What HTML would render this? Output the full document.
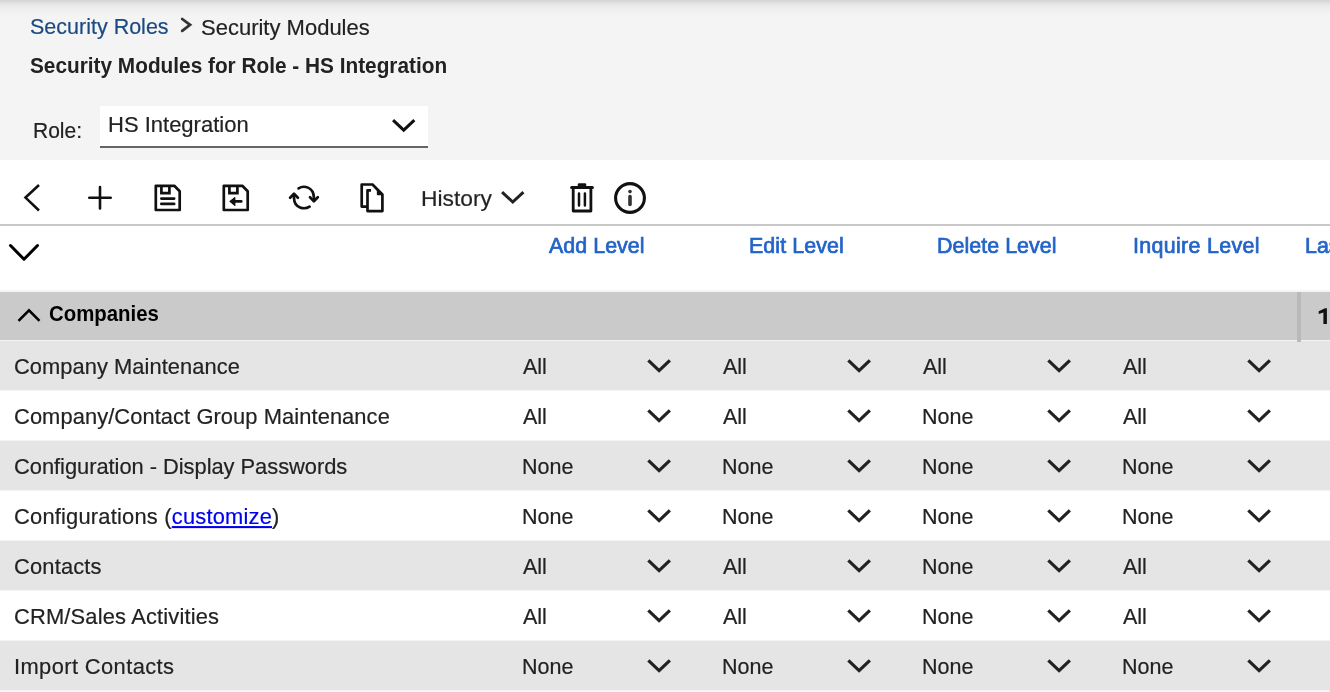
<!DOCTYPE html>
<html><head><meta charset="utf-8"><style>
html,body{margin:0;padding:0;}
body{width:1330px;height:692px;overflow:hidden;position:relative;background:#fff;font-family:"Liberation Sans",sans-serif;}
.t{position:absolute;white-space:nowrap;line-height:normal;will-change:transform;}
.ic{position:absolute;overflow:visible;}
.bx{position:absolute;}
</style></head><body>
<div class="bx" style="left:0;top:0;width:1330px;height:160px;background:#f4f4f4"></div>
<div class="bx" style="left:0;top:0;width:1330px;height:15px;background:linear-gradient(#d3d3d3 0px,#e2e2e2 3px,#eaeaea 6px,#f0f0f0 10px,#f4f4f4 15px)"></div>
<div class="t" style="left:29.8px;top:15.22px;font-size:21.5px;color:#1b4a80;font-weight:normal;transform:scaleY(1.0516);transform-origin:0 19.78px;-webkit-text-stroke:0.2px #1b4a80;">Security Roles</div>
<svg class="ic" style="left:178px;top:16px" width="16" height="18"><polyline points="4.2,3 12,8.8 4.2,14.8" fill="none" stroke="#333" stroke-width="2.8" stroke-linecap="round"/></svg>
<div class="t" style="left:201px;top:14.76px;font-size:22px;color:#222;font-weight:normal;transform:scaleY(1.0277);transform-origin:0 20.24px;-webkit-text-stroke:0.2px #222;">Security Modules</div>
<div class="t" style="left:29.5px;top:53.96px;font-size:20.8px;color:#222;font-weight:bold;transform:scaleY(1.0870);transform-origin:0 19.14px;">Security Modules for Role - HS Integration</div>
<div class="t" style="left:33px;top:118.58px;font-size:21px;color:#222;font-weight:normal;transform:scaleY(1.0766);transform-origin:0 19.32px;-webkit-text-stroke:0.2px #222;">Role:</div>
<div class="bx" style="left:100px;top:106px;width:328px;height:40px;background:#fff;border-bottom:2px solid #666"></div>
<div class="t" style="left:108px;top:111.86px;font-size:22px;color:#222;font-weight:normal;transform:scaleY(1.0277);transform-origin:0 20.24px;-webkit-text-stroke:0.2px #222;">HS Integration</div>
<svg class="ic" style="left:389.4px;top:116px" width="29.4" height="19.3"><polyline points="4.06,4.06 14.70,14.18 25.34,4.06" fill="none" stroke="#111" stroke-width="3" stroke-linecap="butt" stroke-linejoin="miter"/></svg>
<div class="bx" style="left:0;top:224px;width:1330px;height:2px;background:#c8c8c8"></div>
<svg class="ic" style="left:20px;top:180px" width="24" height="36"><polyline points="19,5 5.5,17.6 19,30.5" fill="none" stroke="#111" stroke-width="2.6"/></svg>
<svg class="ic" style="left:84px;top:182px" width="32" height="32"><path d="M5.3,15.7 H26.7 M16,5.1 V26.4" fill="none" stroke="#111" stroke-width="2.6" stroke-linecap="round"/></svg>
<svg class="ic" style="left:154px;top:184px" width="28" height="28"><path d="M1.8,1.8 H20.3 L25.7,7.2 V26 H1.8 Z" fill="none" stroke="#111" stroke-width="2.7" stroke-linejoin="round"/><path d="M7.4,1.8 V9.2 H15.4 V1.8" fill="none" stroke="#111" stroke-width="2.7"/><path d="M7.3,14.6 H20.2 M7.3,19.9 H20.2" stroke="#111" stroke-width="2.6" stroke-linecap="round"/></svg>
<svg class="ic" style="left:222px;top:184px" width="28" height="28"><path d="M1.8,1.8 H20.3 L25.7,7.2 V26 H1.8 Z" fill="none" stroke="#111" stroke-width="2.7" stroke-linejoin="round"/><path d="M7.4,1.8 V9.2 H15.4 V1.8" fill="none" stroke="#111" stroke-width="2.7"/><path d="M19.3,17.4 H10" stroke="#111" stroke-width="2.6" stroke-linecap="round"/><path d="M8,17.4 L12.8,13.6 V21.4 Z" fill="#111" stroke="#111" stroke-width="1.2" stroke-linejoin="round"/></svg>
<svg class="ic" style="left:288px;top:184px" width="32" height="28"><path d="M10.6,4.4 C15.5,1.2 25.5,2.5 25.9,13.5 V16" fill="none" stroke="#111" stroke-width="2.7" stroke-linecap="round"/><path d="M22,13.3 L25.9,17.2 L29.8,13.3" fill="none" stroke="#111" stroke-width="2.7" stroke-linecap="round" stroke-linejoin="round"/><path d="M21.6,22.6 C16.5,25.8 6.3,24.5 6,14 V11" fill="none" stroke="#111" stroke-width="2.7" stroke-linecap="round"/><path d="M2.1,13.7 L6,9.8 L9.9,13.7" fill="none" stroke="#111" stroke-width="2.7" stroke-linecap="round" stroke-linejoin="round"/></svg>
<svg class="ic" style="left:358px;top:181px" width="30" height="34"><path d="M9.5,25.6 H3.7 V3.5 H14.5 L24.4,13.4 V30.1 H9.5 V9.3 H13" fill="none" stroke="#111" stroke-width="2.7" stroke-linejoin="round"/><path d="M14.5,3.5 L24.4,13.4 H19.6 V9.5 Z" fill="#111" stroke="#111" stroke-width="1.5" stroke-linejoin="round"/></svg>
<div class="t" style="left:421.3px;top:185.12px;font-size:22.8px;color:#222;font-weight:normal;transform:scaleY(0.9916);transform-origin:0 20.98px;-webkit-text-stroke:0.2px #222;">History</div>
<svg class="ic" style="left:498.1px;top:188.2px" width="29.5" height="19.1"><polyline points="4.06,4.06 14.75,13.98 25.44,4.06" fill="none" stroke="#222" stroke-width="3" stroke-linecap="butt" stroke-linejoin="miter"/></svg>
<svg class="ic" style="left:568px;top:181px" width="28" height="34"><path d="M3.6,6.5 H24.4" stroke="#111" stroke-width="3" stroke-linecap="round"/><path d="M9.8,6 V3.5 Q9.8,2.3 11,2.3 H17 Q18.2,2.3 18.2,3.5 V6 Z" fill="#111"/><path d="M5.2,7 V30 H22.9 V7" fill="none" stroke="#111" stroke-width="2.8" stroke-linejoin="round"/><path d="M11,12.6 V24.4 M16.9,12.6 V24.4" stroke="#111" stroke-width="2.5" stroke-linecap="round"/></svg>
<svg class="ic" style="left:612px;top:180px" width="36" height="36"><circle cx="18" cy="18" r="14.4" fill="none" stroke="#111" stroke-width="3.1"/><circle cx="18" cy="11.6" r="1.8" fill="#333"/><path d="M18,16.6 V24.4" stroke="#333" stroke-width="3.6" stroke-linecap="round"/></svg>
<svg class="ic" style="left:6px;top:241.2px" width="36" height="22.8"><polyline points="4.50,4.50 18.00,18.30 31.50,4.50" fill="none" stroke="#000" stroke-width="3" stroke-linecap="round" stroke-linejoin="round"/></svg>
<div class="t" style="left:549px;top:234.11px;font-size:21.4px;color:#2364c8;font-weight:normal;transform:scaleY(1.0565);transform-origin:0 19.69px;-webkit-text-stroke:0.7px #2364c8;letter-spacing:0.05px;">Add Level</div>
<div class="t" style="left:749px;top:234.11px;font-size:21.4px;color:#2364c8;font-weight:normal;transform:scaleY(1.0565);transform-origin:0 19.69px;-webkit-text-stroke:0.7px #2364c8;letter-spacing:0.1px;">Edit Level</div>
<div class="t" style="left:936.8px;top:234.11px;font-size:21.4px;color:#2364c8;font-weight:normal;transform:scaleY(1.0565);transform-origin:0 19.69px;-webkit-text-stroke:0.7px #2364c8;letter-spacing:0.05px;">Delete Level</div>
<div class="t" style="left:1133.4px;top:234.11px;font-size:21.4px;color:#2364c8;font-weight:normal;transform:scaleY(1.0565);transform-origin:0 19.69px;-webkit-text-stroke:0.7px #2364c8;letter-spacing:0.33px;">Inquire Level</div>
<div class="t" style="left:1304.7px;top:234.11px;font-size:21.4px;color:#2364c8;font-weight:normal;transform:scaleY(1.0565);transform-origin:0 19.69px;-webkit-text-stroke:0.7px #2364c8;letter-spacing:0px;">Last Changed</div>
<div class="bx" style="left:0;top:290px;width:1330px;height:2px;background:#f4f4f4"></div>
<div class="bx" style="left:0;top:292px;width:1330px;height:48px;background:#cacaca"></div>
<svg class="ic" style="left:15px;top:306px" width="28" height="20"><polyline points="3.5,14.8 14,4.3 24.5,14.8" fill="none" stroke="#000" stroke-width="2.6"/></svg>
<div class="t" style="left:48.7px;top:302.93px;font-size:20.4px;color:#000;font-weight:bold;transform:scaleY(1.1083);transform-origin:0 18.77px;">Companies</div>
<div class="bx" style="left:1297px;top:292px;width:4px;height:50px;background:#b9b9b9;z-index:2"></div>
<svg class="ic" style="left:1316px;top:306px" width="14" height="20"><path d="M2.7,5.3 L9,2.3 H10.9 V18 H7.4 V6.4 L2.7,8.1 Z" fill="#111"/></svg>
<div class="bx" style="left:0;top:340px;width:1330px;height:1px;background:#f4f4f4"></div>
<div class="bx" style="left:0;top:341px;width:1330px;height:49px;background:#e5e5e5"></div>
<div class="t" style="left:13.8px;top:353.85px;font-size:21.9px;color:#222;font-weight:normal;transform:scaleY(1.0324);transform-origin:0 20.15px;-webkit-text-stroke:0.2px #222;letter-spacing:0.04px;">Company Maintenance</div>
<div class="t" style="left:522.7px;top:354.92px;font-size:21.5px;color:#222;font-weight:normal;transform:scaleY(1.0516);transform-origin:0 19.78px;-webkit-text-stroke:0.2px #222;">All</div>
<svg class="ic" style="left:644.1999999999999px;top:356.0px" width="30.200000000000003" height="20.0"><polyline points="4.33,4.33 15.10,14.54 25.87,4.33" fill="none" stroke="#222" stroke-width="3.2" stroke-linecap="butt" stroke-linejoin="miter"/></svg>
<div class="t" style="left:722.7px;top:354.92px;font-size:21.5px;color:#222;font-weight:normal;transform:scaleY(1.0516);transform-origin:0 19.78px;-webkit-text-stroke:0.2px #222;">All</div>
<svg class="ic" style="left:844.1999999999999px;top:356.0px" width="30.200000000000003" height="20.0"><polyline points="4.33,4.33 15.10,14.54 25.87,4.33" fill="none" stroke="#222" stroke-width="3.2" stroke-linecap="butt" stroke-linejoin="miter"/></svg>
<div class="t" style="left:922.7px;top:354.92px;font-size:21.5px;color:#222;font-weight:normal;transform:scaleY(1.0516);transform-origin:0 19.78px;-webkit-text-stroke:0.2px #222;">All</div>
<svg class="ic" style="left:1044.2px;top:356.0px" width="30.200000000000003" height="20.0"><polyline points="4.33,4.33 15.10,14.54 25.87,4.33" fill="none" stroke="#222" stroke-width="3.2" stroke-linecap="butt" stroke-linejoin="miter"/></svg>
<div class="t" style="left:1122.7px;top:354.92px;font-size:21.5px;color:#222;font-weight:normal;transform:scaleY(1.0516);transform-origin:0 19.78px;-webkit-text-stroke:0.2px #222;">All</div>
<svg class="ic" style="left:1244.2px;top:356.0px" width="30.200000000000003" height="20.0"><polyline points="4.33,4.33 15.10,14.54 25.87,4.33" fill="none" stroke="#222" stroke-width="3.2" stroke-linecap="butt" stroke-linejoin="miter"/></svg>
<div class="bx" style="left:0;top:390px;width:1330px;height:1px;background:#f4f4f4"></div>
<div class="bx" style="left:0;top:391px;width:1330px;height:49px;background:#ffffff"></div>
<div class="t" style="left:13.8px;top:403.85px;font-size:21.9px;color:#222;font-weight:normal;transform:scaleY(1.0324);transform-origin:0 20.15px;-webkit-text-stroke:0.2px #222;letter-spacing:0.07px;">Company/Contact Group Maintenance</div>
<div class="t" style="left:522.7px;top:404.92px;font-size:21.5px;color:#222;font-weight:normal;transform:scaleY(1.0516);transform-origin:0 19.78px;-webkit-text-stroke:0.2px #222;">All</div>
<svg class="ic" style="left:644.1999999999999px;top:406.0px" width="30.200000000000003" height="20.0"><polyline points="4.33,4.33 15.10,14.54 25.87,4.33" fill="none" stroke="#222" stroke-width="3.2" stroke-linecap="butt" stroke-linejoin="miter"/></svg>
<div class="t" style="left:722.7px;top:404.92px;font-size:21.5px;color:#222;font-weight:normal;transform:scaleY(1.0516);transform-origin:0 19.78px;-webkit-text-stroke:0.2px #222;">All</div>
<svg class="ic" style="left:844.1999999999999px;top:406.0px" width="30.200000000000003" height="20.0"><polyline points="4.33,4.33 15.10,14.54 25.87,4.33" fill="none" stroke="#222" stroke-width="3.2" stroke-linecap="butt" stroke-linejoin="miter"/></svg>
<div class="t" style="left:921.9px;top:404.92px;font-size:21.5px;color:#222;font-weight:normal;transform:scaleY(1.0516);transform-origin:0 19.78px;-webkit-text-stroke:0.2px #222;">None</div>
<svg class="ic" style="left:1044.2px;top:406.0px" width="30.200000000000003" height="20.0"><polyline points="4.33,4.33 15.10,14.54 25.87,4.33" fill="none" stroke="#222" stroke-width="3.2" stroke-linecap="butt" stroke-linejoin="miter"/></svg>
<div class="t" style="left:1122.7px;top:404.92px;font-size:21.5px;color:#222;font-weight:normal;transform:scaleY(1.0516);transform-origin:0 19.78px;-webkit-text-stroke:0.2px #222;">All</div>
<svg class="ic" style="left:1244.2px;top:406.0px" width="30.200000000000003" height="20.0"><polyline points="4.33,4.33 15.10,14.54 25.87,4.33" fill="none" stroke="#222" stroke-width="3.2" stroke-linecap="butt" stroke-linejoin="miter"/></svg>
<div class="bx" style="left:0;top:440px;width:1330px;height:1px;background:#f4f4f4"></div>
<div class="bx" style="left:0;top:441px;width:1330px;height:49px;background:#e5e5e5"></div>
<div class="t" style="left:13.8px;top:453.85px;font-size:21.9px;color:#222;font-weight:normal;transform:scaleY(1.0324);transform-origin:0 20.15px;-webkit-text-stroke:0.2px #222;letter-spacing:-0.04px;">Configuration - Display Passwords</div>
<div class="t" style="left:521.9px;top:454.92px;font-size:21.5px;color:#222;font-weight:normal;transform:scaleY(1.0516);transform-origin:0 19.78px;-webkit-text-stroke:0.2px #222;">None</div>
<svg class="ic" style="left:644.1999999999999px;top:456.0px" width="30.200000000000003" height="20.0"><polyline points="4.33,4.33 15.10,14.54 25.87,4.33" fill="none" stroke="#222" stroke-width="3.2" stroke-linecap="butt" stroke-linejoin="miter"/></svg>
<div class="t" style="left:721.9px;top:454.92px;font-size:21.5px;color:#222;font-weight:normal;transform:scaleY(1.0516);transform-origin:0 19.78px;-webkit-text-stroke:0.2px #222;">None</div>
<svg class="ic" style="left:844.1999999999999px;top:456.0px" width="30.200000000000003" height="20.0"><polyline points="4.33,4.33 15.10,14.54 25.87,4.33" fill="none" stroke="#222" stroke-width="3.2" stroke-linecap="butt" stroke-linejoin="miter"/></svg>
<div class="t" style="left:921.9px;top:454.92px;font-size:21.5px;color:#222;font-weight:normal;transform:scaleY(1.0516);transform-origin:0 19.78px;-webkit-text-stroke:0.2px #222;">None</div>
<svg class="ic" style="left:1044.2px;top:456.0px" width="30.200000000000003" height="20.0"><polyline points="4.33,4.33 15.10,14.54 25.87,4.33" fill="none" stroke="#222" stroke-width="3.2" stroke-linecap="butt" stroke-linejoin="miter"/></svg>
<div class="t" style="left:1121.9px;top:454.92px;font-size:21.5px;color:#222;font-weight:normal;transform:scaleY(1.0516);transform-origin:0 19.78px;-webkit-text-stroke:0.2px #222;">None</div>
<svg class="ic" style="left:1244.2px;top:456.0px" width="30.200000000000003" height="20.0"><polyline points="4.33,4.33 15.10,14.54 25.87,4.33" fill="none" stroke="#222" stroke-width="3.2" stroke-linecap="butt" stroke-linejoin="miter"/></svg>
<div class="bx" style="left:0;top:490px;width:1330px;height:1px;background:#f4f4f4"></div>
<div class="bx" style="left:0;top:491px;width:1330px;height:49px;background:#ffffff"></div>
<div class="t" style="left:13.8px;top:503.85px;font-size:21.9px;color:#222;font-weight:normal;transform:scaleY(1.0324);transform-origin:0 20.15px;-webkit-text-stroke:0.2px #222;letter-spacing:0.2px;">Configurations (<span style="color:#0000ee;text-decoration:underline;-webkit-text-stroke:0.2px #0000ee">customize</span>)</div>
<div class="t" style="left:521.9px;top:504.92px;font-size:21.5px;color:#222;font-weight:normal;transform:scaleY(1.0516);transform-origin:0 19.78px;-webkit-text-stroke:0.2px #222;">None</div>
<svg class="ic" style="left:644.1999999999999px;top:506.0px" width="30.200000000000003" height="20.0"><polyline points="4.33,4.33 15.10,14.54 25.87,4.33" fill="none" stroke="#222" stroke-width="3.2" stroke-linecap="butt" stroke-linejoin="miter"/></svg>
<div class="t" style="left:721.9px;top:504.92px;font-size:21.5px;color:#222;font-weight:normal;transform:scaleY(1.0516);transform-origin:0 19.78px;-webkit-text-stroke:0.2px #222;">None</div>
<svg class="ic" style="left:844.1999999999999px;top:506.0px" width="30.200000000000003" height="20.0"><polyline points="4.33,4.33 15.10,14.54 25.87,4.33" fill="none" stroke="#222" stroke-width="3.2" stroke-linecap="butt" stroke-linejoin="miter"/></svg>
<div class="t" style="left:921.9px;top:504.92px;font-size:21.5px;color:#222;font-weight:normal;transform:scaleY(1.0516);transform-origin:0 19.78px;-webkit-text-stroke:0.2px #222;">None</div>
<svg class="ic" style="left:1044.2px;top:506.0px" width="30.200000000000003" height="20.0"><polyline points="4.33,4.33 15.10,14.54 25.87,4.33" fill="none" stroke="#222" stroke-width="3.2" stroke-linecap="butt" stroke-linejoin="miter"/></svg>
<div class="t" style="left:1121.9px;top:504.92px;font-size:21.5px;color:#222;font-weight:normal;transform:scaleY(1.0516);transform-origin:0 19.78px;-webkit-text-stroke:0.2px #222;">None</div>
<svg class="ic" style="left:1244.2px;top:506.0px" width="30.200000000000003" height="20.0"><polyline points="4.33,4.33 15.10,14.54 25.87,4.33" fill="none" stroke="#222" stroke-width="3.2" stroke-linecap="butt" stroke-linejoin="miter"/></svg>
<div class="bx" style="left:0;top:540px;width:1330px;height:1px;background:#f4f4f4"></div>
<div class="bx" style="left:0;top:541px;width:1330px;height:49px;background:#e5e5e5"></div>
<div class="t" style="left:13.8px;top:553.85px;font-size:21.9px;color:#222;font-weight:normal;transform:scaleY(1.0324);transform-origin:0 20.15px;-webkit-text-stroke:0.2px #222;letter-spacing:0.16px;">Contacts</div>
<div class="t" style="left:522.7px;top:554.92px;font-size:21.5px;color:#222;font-weight:normal;transform:scaleY(1.0516);transform-origin:0 19.78px;-webkit-text-stroke:0.2px #222;">All</div>
<svg class="ic" style="left:644.1999999999999px;top:556.0px" width="30.200000000000003" height="20.0"><polyline points="4.33,4.33 15.10,14.54 25.87,4.33" fill="none" stroke="#222" stroke-width="3.2" stroke-linecap="butt" stroke-linejoin="miter"/></svg>
<div class="t" style="left:722.7px;top:554.92px;font-size:21.5px;color:#222;font-weight:normal;transform:scaleY(1.0516);transform-origin:0 19.78px;-webkit-text-stroke:0.2px #222;">All</div>
<svg class="ic" style="left:844.1999999999999px;top:556.0px" width="30.200000000000003" height="20.0"><polyline points="4.33,4.33 15.10,14.54 25.87,4.33" fill="none" stroke="#222" stroke-width="3.2" stroke-linecap="butt" stroke-linejoin="miter"/></svg>
<div class="t" style="left:921.9px;top:554.92px;font-size:21.5px;color:#222;font-weight:normal;transform:scaleY(1.0516);transform-origin:0 19.78px;-webkit-text-stroke:0.2px #222;">None</div>
<svg class="ic" style="left:1044.2px;top:556.0px" width="30.200000000000003" height="20.0"><polyline points="4.33,4.33 15.10,14.54 25.87,4.33" fill="none" stroke="#222" stroke-width="3.2" stroke-linecap="butt" stroke-linejoin="miter"/></svg>
<div class="t" style="left:1122.7px;top:554.92px;font-size:21.5px;color:#222;font-weight:normal;transform:scaleY(1.0516);transform-origin:0 19.78px;-webkit-text-stroke:0.2px #222;">All</div>
<svg class="ic" style="left:1244.2px;top:556.0px" width="30.200000000000003" height="20.0"><polyline points="4.33,4.33 15.10,14.54 25.87,4.33" fill="none" stroke="#222" stroke-width="3.2" stroke-linecap="butt" stroke-linejoin="miter"/></svg>
<div class="bx" style="left:0;top:590px;width:1330px;height:1px;background:#f4f4f4"></div>
<div class="bx" style="left:0;top:591px;width:1330px;height:49px;background:#ffffff"></div>
<div class="t" style="left:13.8px;top:603.85px;font-size:21.9px;color:#222;font-weight:normal;transform:scaleY(1.0324);transform-origin:0 20.15px;-webkit-text-stroke:0.2px #222;letter-spacing:0.16px;">CRM/Sales Activities</div>
<div class="t" style="left:522.7px;top:604.92px;font-size:21.5px;color:#222;font-weight:normal;transform:scaleY(1.0516);transform-origin:0 19.78px;-webkit-text-stroke:0.2px #222;">All</div>
<svg class="ic" style="left:644.1999999999999px;top:606.0px" width="30.200000000000003" height="20.0"><polyline points="4.33,4.33 15.10,14.54 25.87,4.33" fill="none" stroke="#222" stroke-width="3.2" stroke-linecap="butt" stroke-linejoin="miter"/></svg>
<div class="t" style="left:722.7px;top:604.92px;font-size:21.5px;color:#222;font-weight:normal;transform:scaleY(1.0516);transform-origin:0 19.78px;-webkit-text-stroke:0.2px #222;">All</div>
<svg class="ic" style="left:844.1999999999999px;top:606.0px" width="30.200000000000003" height="20.0"><polyline points="4.33,4.33 15.10,14.54 25.87,4.33" fill="none" stroke="#222" stroke-width="3.2" stroke-linecap="butt" stroke-linejoin="miter"/></svg>
<div class="t" style="left:921.9px;top:604.92px;font-size:21.5px;color:#222;font-weight:normal;transform:scaleY(1.0516);transform-origin:0 19.78px;-webkit-text-stroke:0.2px #222;">None</div>
<svg class="ic" style="left:1044.2px;top:606.0px" width="30.200000000000003" height="20.0"><polyline points="4.33,4.33 15.10,14.54 25.87,4.33" fill="none" stroke="#222" stroke-width="3.2" stroke-linecap="butt" stroke-linejoin="miter"/></svg>
<div class="t" style="left:1122.7px;top:604.92px;font-size:21.5px;color:#222;font-weight:normal;transform:scaleY(1.0516);transform-origin:0 19.78px;-webkit-text-stroke:0.2px #222;">All</div>
<svg class="ic" style="left:1244.2px;top:606.0px" width="30.200000000000003" height="20.0"><polyline points="4.33,4.33 15.10,14.54 25.87,4.33" fill="none" stroke="#222" stroke-width="3.2" stroke-linecap="butt" stroke-linejoin="miter"/></svg>
<div class="bx" style="left:0;top:640px;width:1330px;height:1px;background:#f4f4f4"></div>
<div class="bx" style="left:0;top:641px;width:1330px;height:49px;background:#e5e5e5"></div>
<div class="t" style="left:13.8px;top:653.85px;font-size:21.9px;color:#222;font-weight:normal;transform:scaleY(1.0324);transform-origin:0 20.15px;-webkit-text-stroke:0.2px #222;letter-spacing:0.39px;">Import Contacts</div>
<div class="t" style="left:521.9px;top:654.92px;font-size:21.5px;color:#222;font-weight:normal;transform:scaleY(1.0516);transform-origin:0 19.78px;-webkit-text-stroke:0.2px #222;">None</div>
<svg class="ic" style="left:644.1999999999999px;top:656.0px" width="30.200000000000003" height="20.0"><polyline points="4.33,4.33 15.10,14.54 25.87,4.33" fill="none" stroke="#222" stroke-width="3.2" stroke-linecap="butt" stroke-linejoin="miter"/></svg>
<div class="t" style="left:721.9px;top:654.92px;font-size:21.5px;color:#222;font-weight:normal;transform:scaleY(1.0516);transform-origin:0 19.78px;-webkit-text-stroke:0.2px #222;">None</div>
<svg class="ic" style="left:844.1999999999999px;top:656.0px" width="30.200000000000003" height="20.0"><polyline points="4.33,4.33 15.10,14.54 25.87,4.33" fill="none" stroke="#222" stroke-width="3.2" stroke-linecap="butt" stroke-linejoin="miter"/></svg>
<div class="t" style="left:921.9px;top:654.92px;font-size:21.5px;color:#222;font-weight:normal;transform:scaleY(1.0516);transform-origin:0 19.78px;-webkit-text-stroke:0.2px #222;">None</div>
<svg class="ic" style="left:1044.2px;top:656.0px" width="30.200000000000003" height="20.0"><polyline points="4.33,4.33 15.10,14.54 25.87,4.33" fill="none" stroke="#222" stroke-width="3.2" stroke-linecap="butt" stroke-linejoin="miter"/></svg>
<div class="t" style="left:1121.9px;top:654.92px;font-size:21.5px;color:#222;font-weight:normal;transform:scaleY(1.0516);transform-origin:0 19.78px;-webkit-text-stroke:0.2px #222;">None</div>
<svg class="ic" style="left:1244.2px;top:656.0px" width="30.200000000000003" height="20.0"><polyline points="4.33,4.33 15.10,14.54 25.87,4.33" fill="none" stroke="#222" stroke-width="3.2" stroke-linecap="butt" stroke-linejoin="miter"/></svg>
<div class="bx" style="left:0;top:690px;width:1330px;height:2px;background:#f4f4f4"></div>
</body></html>
